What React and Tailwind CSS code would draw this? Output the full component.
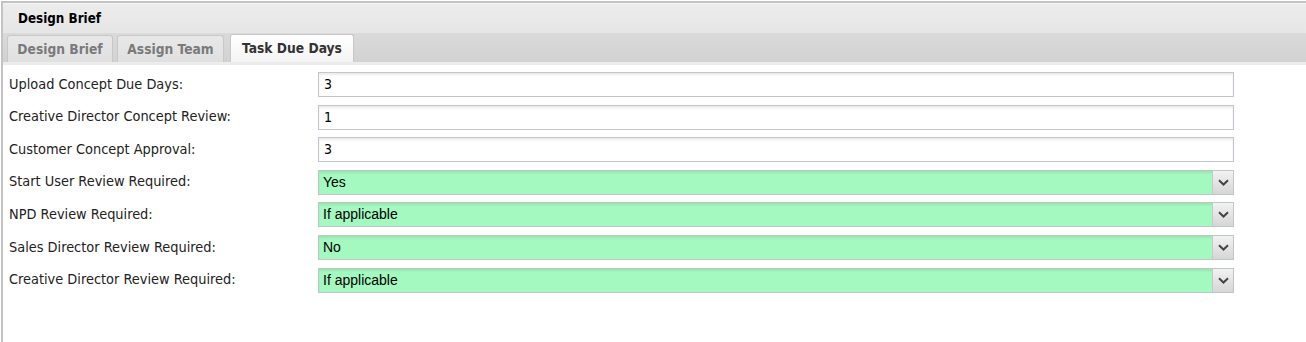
import React from "react";

const tahoma = { fontFamily: '"DejaVu Sans Condensed", "DejaVu Sans", sans-serif' };

const rows = [
  { label: "Upload Concept Due Days:", value: "3", type: "input" },
  { label: "Creative Director Concept Review:", value: "1", type: "input" },
  { label: "Customer Concept Approval:", value: "3", type: "input" },
  { label: "Start User Review Required:", value: "Yes", type: "select" },
  { label: "NPD Review Required:", value: "If applicable", type: "select" },
  { label: "Sales Director Review Required:", value: "No", type: "select" },
  { label: "Creative Director Review Required:", value: "If applicable", type: "select" },
];

const tabs = [
  { name: "Design Brief", cls: "w-[106px]" },
  { name: "Assign Team", cls: "w-[107px]" },
  { name: "Task Due Days", cls: "w-[124px] ml-[2px]" },
];

function Chevron() {
  return (
    <svg width="11" height="7" viewBox="0 0 11 7">
      <path d="M1 1.2 L5.5 5.5 L10 1.2" fill="none" stroke="#444" strokeWidth="2" />
    </svg>
  );
}

export default function App() {
  const active = 2;
  return (
    <div className="w-[1306px] h-[342px] bg-white overflow-hidden pt-[1px]">
      <div className="h-[400px] border-t-2 border-l-2 border-[#c4c3c4] ml-[1px]">
        {/* Header */}
        <div
          className="h-[30px] flex items-center pl-[15px] bg-gradient-to-b from-[#ececec] to-[#e6e6e6] border-t border-[#f6f6f6] text-[13.3px] font-bold text-black"
          style={tahoma}
        >
          Design Brief
        </div>

        {/* Tab bar */}
        <div className="h-[32px] bg-gradient-to-b from-[#dadada] to-[#d2d2d2] flex items-end gap-[4px] pl-[4px] border-b-[3px] border-[#ececec]">
          {tabs.map((t, i) => (
            <div
              key={t.name}
              className={
                (i === active
                  ? "h-[28px] flex items-center justify-center rounded-t-[3px] border border-b-0 border-[#c8c8c8] bg-gradient-to-b from-[#ffffff] to-[#f4f4f4] text-[13.7px] font-bold text-[#333] "
                  : "h-[27px] flex items-center justify-center rounded-t-[3px] border border-b-0 border-[#c8c8c8] bg-gradient-to-b from-[#e8e8e8] to-[#e0e0e0] text-[13.7px] font-bold text-[#7a7a7a] ") +
                t.cls
              }
              style={tahoma}
            >
              {t.name}
            </div>
          ))}
        </div>

        {/* Form */}
        <div className="pt-[7px] flex flex-col gap-[7.6px]">
          {rows.map((r) => (
            <div key={r.label} className="flex items-center h-[25px]">
              <div className="w-[315px] pl-[6px] text-[14.4px] text-[#222]" style={tahoma}>
                {r.label}
              </div>
              {r.type === "input" ? (
                <div
                  className="w-[916px] h-[25px] border border-[#c4c4d0] bg-white shadow-[inset_0_2px_2px_rgba(0,0,0,0.08)] flex items-center pl-[5px] text-[14px] text-black"
                  style={tahoma}
                >
                  {r.value}
                </div>
              ) : (
                <div className="w-[916px] h-[25px] border border-[#bfc6c4] bg-[#a3f9bf] shadow-[inset_0_2px_2px_rgba(0,0,0,0.08)] flex items-center">
                  <div
                    className="flex-1 pl-[4px] text-[14px] text-black"
                    style={{ fontFamily: '"Liberation Sans", Arial, sans-serif' }}
                  >
                    {r.value}
                  </div>
                  <div className="w-[21px] h-full border-l border-[#c8c8c8] bg-gradient-to-b from-[#f2f2f2] to-[#d6d6d6] flex items-center justify-center">
                    <Chevron />
                  </div>
                </div>
              )}
            </div>
          ))}
        </div>
      </div>
    </div>
  );
}
